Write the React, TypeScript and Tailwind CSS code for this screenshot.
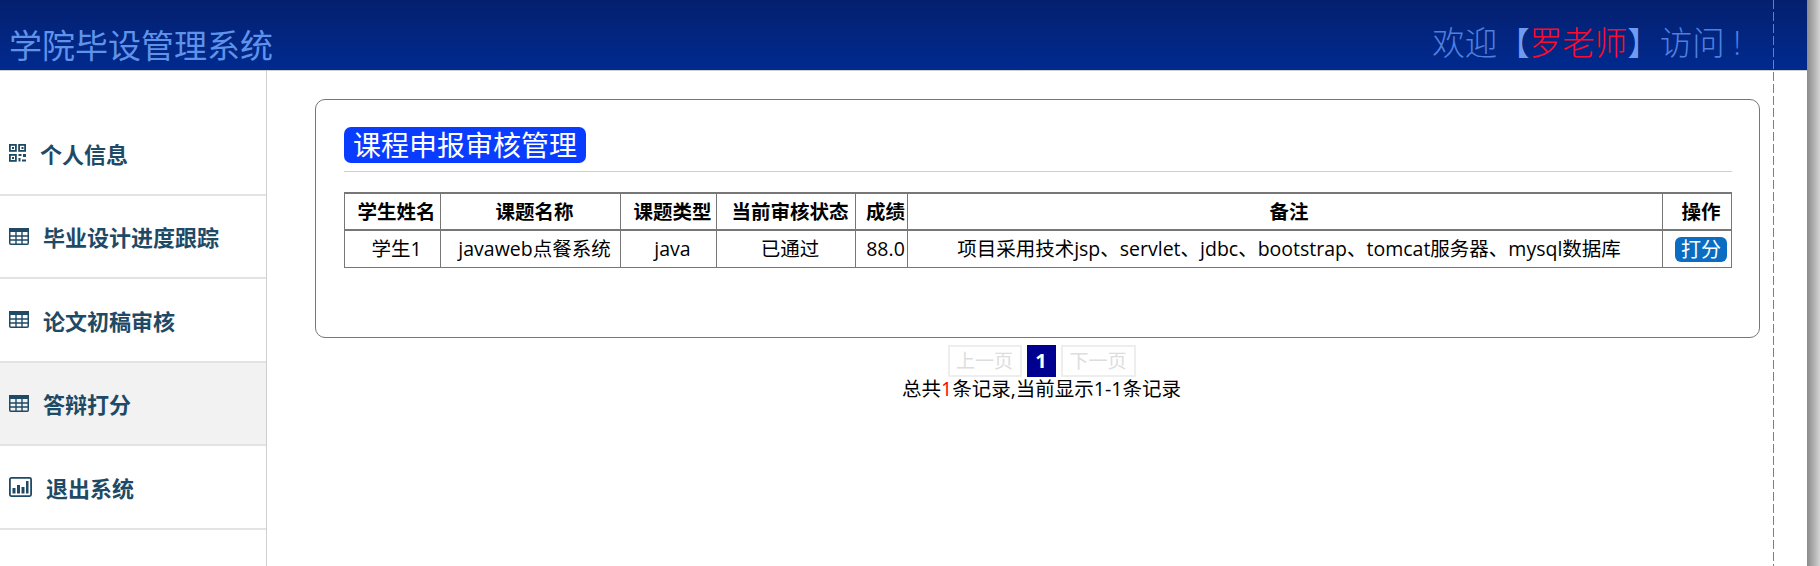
import type { ReactNode } from 'react';

const FONT = "font-['Open_Sans','Noto_Sans_CJK_SC',sans-serif]";

function QrIcon() {
  return (
    <svg width="17" height="18" viewBox="0 0 17 18" fill="none" className="shrink-0 text-[#1f4a66]">
      <g stroke="currentColor" strokeWidth="1.8">
        <rect x="0.9" y="0.9" width="6" height="6" />
        <rect x="10.1" y="0.9" width="6" height="6" />
        <rect x="0.9" y="10.9" width="6" height="6" />
      </g>
      <g fill="currentColor">
        <rect x="3" y="3" width="2" height="2" />
        <rect x="12.5" y="3" width="2" height="2" />
        <rect x="3" y="13" width="2" height="2" />
        <rect x="9.5" y="10" width="3" height="2" />
        <rect x="14" y="10" width="3" height="3" />
        <rect x="9.5" y="14" width="2" height="3.5" />
        <rect x="13" y="15.5" width="4" height="2" />
      </g>
    </svg>
  );
}

function TableIcon() {
  return (
    <svg width="20" height="17" viewBox="0 0 20 17" fill="none" className="shrink-0 text-[#1f4a66]">
      <rect x="0.75" y="0.75" width="18.5" height="15.5" rx="1" stroke="currentColor" strokeWidth="1.5" />
      <rect x="0" y="0" width="20" height="4" fill="currentColor" />
      <path d="M0.5 8h19M0.5 12h19M7 3v13M13 3v13" stroke="currentColor" strokeWidth="1.4" />
    </svg>
  );
}

function ChartIcon() {
  return (
    <svg width="23" height="20" viewBox="0 0 23 20" fill="none" className="shrink-0 text-[#1f4a66]">
      <rect x="0.9" y="0.9" width="21.2" height="18.2" rx="1.5" stroke="currentColor" strokeWidth="1.8" />
      <g fill="currentColor">
        <rect x="3.5" y="11" width="3" height="5.5" />
        <rect x="8" y="8" width="3" height="8.5" />
        <rect x="12.5" y="10" width="3" height="6.5" />
        <rect x="17" y="4" width="2.5" height="12.5" />
      </g>
    </svg>
  );
}

const menuItems: { label: string; icon: ReactNode; active?: boolean }[] = [
  { label: '个人信息', icon: <QrIcon /> },
  { label: '毕业设计进度跟踪', icon: <TableIcon /> },
  { label: '论文初稿审核', icon: <TableIcon /> },
  { label: '答辩打分', icon: <TableIcon />, active: true },
  { label: '退出系统', icon: <ChartIcon /> },
];

function Sidebar() {
  return (
    <aside className="w-[267px] shrink-0 border-r border-[#cfcfcf] pt-[41px]">
      {menuItems.map((item) => (
        <div
          key={item.label}
          className={`flex h-[83.5px] items-center gap-[14px] border-b-2 border-[#e3e3e3] pl-[9px] text-[22px] font-bold text-[#1f4a66] ${
            item.active ? 'bg-[#f2f2f2]' : ''
          }`}
        >
          {item.icon}
          <span className="pt-[3px]">{item.label}</span>
        </div>
      ))}
    </aside>
  );
}

function ReviewTable() {
  const th = 'border border-[#777] border-b-2 border-t-2 font-bold text-black h-[37px] pl-[8px] text-center whitespace-nowrap';
  const td = 'border border-[#777] h-[37px] pl-[8px] text-center text-black whitespace-nowrap';
  return (
    <table className="w-[1387px] table-fixed border-collapse text-[19.5px] leading-[26px]">
      <colgroup>
        <col className="w-[96px]" />
        <col className="w-[180px]" />
        <col className="w-[96px]" />
        <col className="w-[139px]" />
        <col className="w-[52px]" />
        <col className="w-[755px]" />
        <col className="w-[69px]" />
      </colgroup>
      <thead>
        <tr>
          <th className={th}>学生姓名</th>
          <th className={th}>课题名称</th>
          <th className={th}>课题类型</th>
          <th className={th}>当前审核状态</th>
          <th className={th}>成绩</th>
          <th className={th}>备注</th>
          <th className={th}>操作</th>
        </tr>
      </thead>
      <tbody>
        <tr>
          <td className={td}>学生1</td>
          <td className={td}>javaweb点餐系统</td>
          <td className={td}>java</td>
          <td className={td}>已通过</td>
          <td className={td}>88.0</td>
          <td className={td}>项目采用技术jsp、servlet、jdbc、bootstrap、tomcat服务器、mysql数据库</td>
          <td className={td}>
            <span className="inline-block rounded-[6px] bg-[#0b6dc2] px-[6px] align-middle text-[20px] leading-[25px] text-white">打分</span>
          </td>
        </tr>
      </tbody>
    </table>
  );
}

function Pagination() {
  const disabled = 'flex h-[32px] items-center justify-center border-2 border-[#eeeeee] text-[#dddddd]';
  return (
    <div className="flex flex-col items-center pl-[8px]">
      <div className="mt-[7px] flex gap-[5px] text-[19px]">
        <span className={`${disabled} w-[74px]`}>上一页</span>
        <span className="flex h-[32px] w-[29px] items-center justify-center bg-[#000090] text-[20px] font-bold text-white">1</span>
        <span className={`${disabled} w-[75px]`}>下一页</span>
      </div>
      <div className="text-[19.5px] leading-[24px] text-black">
        总共<span className="text-[#ff0000]">1</span>条记录,当前显示1-1条记录
      </div>
    </div>
  );
}

export default function App() {
  return (
    <div className={`relative flex h-[566px] w-[1820px] overflow-hidden bg-white ${FONT}`}>
      <div className="flex w-[1807px] flex-col">
        <header className="flex h-[71px] shrink-0 items-end justify-between border-b border-[#cfcfcf] bg-gradient-to-b from-[#04206f] to-[#002a90] pl-[9px] pr-[66px]">
          <h1 className="text-[33px] leading-[48px] font-normal text-[#5f93ea]">学院毕设管理系统</h1>
          <div className="pb-[3px] text-[32.5px] leading-[48px] font-light whitespace-nowrap text-[#4f80e0]">
            欢迎<span className="text-[#6f9cf0]">【</span>
            <span className="text-[#ff0a2a]">罗老师</span>
            <span className="text-[#6f9cf0]">】</span>访问 !
          </div>
        </header>
        <div className="flex min-h-0 flex-1">
          <Sidebar />
          <main className="flex-1 pl-[48px] pr-[49px] pt-[28px]">
            <section className="h-[239px] rounded-[10px] border border-[#777] pl-[28px] pr-[27px] pt-[27px]">
              <div className="border-b border-[#cfcfcf] pb-[8px]">
                <span className="block w-fit rounded-[7px] bg-[#0a3cff] px-[9px] text-[28px] leading-[36px] text-white">
                  课程申报审核管理
                </span>
              </div>
              <div className="mt-[20px]">
                <ReviewTable />
              </div>
            </section>
            <Pagination />
          </main>
        </div>
      </div>
      <div className="w-[13px] bg-gradient-to-r from-[#8a8a8a] to-[#d4d4d4]" />
      <div className="absolute bottom-0 left-[1773px] top-0 w-px bg-[repeating-linear-gradient(to_bottom,#1e9be8_0,#1e9be8_9px,transparent_9px,transparent_12px)]" />
    </div>
  );
}
